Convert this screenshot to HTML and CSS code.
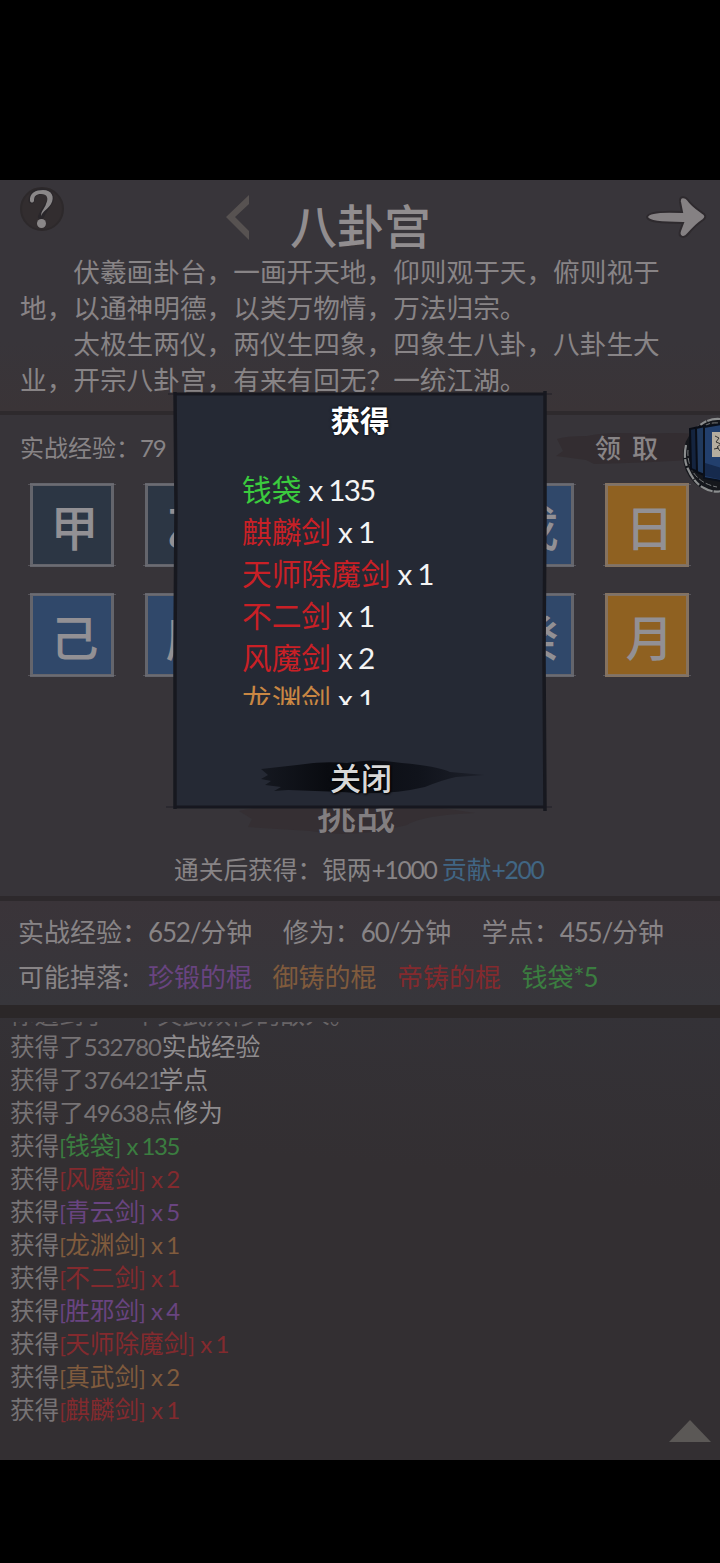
FILE: index.html
```
<!DOCTYPE html>
<html lang="zh-CN">
<head>
<meta charset="utf-8">
<title>八卦宫</title>
<link rel="stylesheet" href="styles.css">
</head>
<body>
<main class="game">
  <section class="intro">
    <header class="top">
      <svg class="help" width="48" height="48" viewBox="0 0 48 48"><circle cx="24" cy="24" r="21" fill="#322d2f" stroke="#2d292b" stroke-width="2"/><path d="M13.500 15.500C14 8 19 6 25 6.500c8 1 10 7 5 13l-5 8-2 4" fill="none" stroke="#29262a" stroke-width="6" stroke-linecap="round"/><path d="M12 16C11 8 18 5 25 5c9 0 12 7 8 14-3 5-8 7-10 12 0-5 4-8 5-12 3-6 1-10-5-10-5 0-7 2-7 7-1 2-3 2-4 0z" fill="#8a8788"/><circle cx="23.500" cy="38.500" r="4.500" fill="#8a8788"/></svg>
      <svg class="back" width="26" height="48" viewBox="0 0 26 48"><path d="M24 1v9L10 23l14 14v9L1 23z" fill="#575251"/></svg>
      <h1>八卦宫</h1>
      <svg class="next" width="66" height="46" viewBox="0 0 66 46"><path d="M3 23C4 18 18 17 38 18L36 8c-1-6 5-6 8-2 4 6 9 9 16 14q3 3-1 6c-6 4-10 8-15 14-4 5-10 3-8-3l3-8C17 29 4 28 3 23z" fill="#858183" stroke="#2e2a2e" stroke-width="2"/></svg>
    </header>
    <p class="story"><span>　　伏羲画卦台，一画开天地，仰则观于天，俯则视于</span><span>地，以通神明德，以类万物情，万法归宗。</span><span>　　太极生两仪，两仪生四象，四象生八卦，八卦生大</span><span>业，开宗八卦宫，有来有回无？一统江湖。</span></p>
  </section>

  <section class="arena">
    <div class="exp"><span>实战经验：<b class="n">79</b></span>
      <div class="claim"><svg width="170" height="42" viewBox="0 0 170 42"><path d="M4 11Q12 8 34 8Q55 3 90 6Q135 3 166 9L148 16L166 22L154 31Q92 35 41 36L33 32L3 28L10 23z" fill="#332d31"/></svg><span>领<em>取</em></span></div>
    </div>
    <div class="tiles">
      <div class="tile dim">甲</div><div class="tile dim">乙</div><div class="tile"></div><div class="tile"></div><div class="tile">戊</div><div class="tile gold">日</div>
      <div class="tile">己</div><div class="tile">庚</div><div class="tile"></div><div class="tile"></div><div class="tile">癸</div><div class="tile gold">月</div>
    </div>
    <div class="fight"><svg width="240" height="42" viewBox="0 0 240 42"><path d="M2 14Q58 2 119 5Q171 5 238 16Q185 18 170 28Q117 42 73 34L11 30L15 22z" fill="#352f33"/></svg><span>挑战</span></div>
    <p class="reward">通关后获得：银两<b class="n">+1000</b> <span class="blue">贡献<b class="n">+200</b></span></p>
  </section>

  <section class="info">
    <p class="rates"><span>实战经验：<b class="n">652/</b>分钟</span><span>修为：<b class="n">60/</b>分钟</span><span>学点：<b class="n">455/</b>分钟</span></p>
    <p class="drops"><span class="label">可能掉落:</span><span class="purple">珍锻的棍</span><span class="orange">御铸的棍</span><span class="red">帝铸的棍</span><span class="green">钱袋<b class="n">*5</b></span></p>
  </section>

  <section class="log">
    <div class="past"><p>你遇到了一个文武双修的敌人。</p></div>
    <p>获得了<b class="n">532780</b><i>实战经验</i></p>
    <p>获得了<b class="n m">376421</b><i>学点</i></p>
    <p>获得了<b class="n">49638</b>点<i>修为</i></p>
    <p>获得<span class="green"><u>[</u>钱袋<u>]</u><b class="n q">x 135</b></span></p>
    <p>获得<span class="red"><u>[</u>风魔剑<u>]</u><b class="n q">x 2</b></span></p>
    <p>获得<span class="purple"><u>[</u>青云剑<u>]</u><b class="n q">x 5</b></span></p>
    <p>获得<span class="orange"><u>[</u>龙渊剑<u>]</u><b class="n q">x 1</b></span></p>
    <p>获得<span class="red"><u>[</u>不二剑<u>]</u><b class="n q">x 1</b></span></p>
    <p>获得<span class="purple"><u>[</u>胜邪剑<u>]</u><b class="n q">x 4</b></span></p>
    <p>获得<span class="red"><u>[</u>天师除魔剑<u>]</u><b class="n q">x 1</b></span></p>
    <p>获得<span class="orange"><u>[</u>真武剑<u>]</u><b class="n q">x 2</b></span></p>
    <p>获得<span class="red"><u>[</u>麒麟剑<u>]</u><b class="n q">x 1</b></span></p>
    <svg class="up" width="42" height="22" viewBox="0 0 42 22"><path d="M21 0L42 22H0z" fill="#5b5856"/></svg>
  </section>

  <svg class="books" width="42" height="80" viewBox="0 0 42 80">
    <circle cx="40" cy="41" r="37" fill="#15171c"/>
    <path d="M40 4Q27 3 17 13M6 30Q3 44 8 54Q14 68 24 73Q32 78 42 76" fill="none" stroke="#8b8d8e" stroke-width="2.200" stroke-dasharray="13 1 7 2"/>
    <path d="M38 8Q28 7 22 13M8 35Q7 46 13 57Q21 69 37 72" fill="none" stroke="#777a7c" stroke-width="1" stroke-dasharray="6 2"/>
    <path d="M10 14l9-2 4 47-12-5z" fill="#14243f" stroke="#090d16" stroke-width="2"/><path d="M16 13l9-2 2 50-10-4z" fill="#20395d" stroke="#090d16" stroke-width="2"/>
    <path d="M24 12l18-3v57l-18-3z" fill="#223f6d" stroke="#0a101b" stroke-width="2"/><path d="M25 48l17 5v12l-17-4z" fill="#162a4d"/>
    <path d="M32 17h10v25H32z" fill="#b5ad9f"/><path d="M35 21l4 2-3 4 5 2-4 3 3 4M34 34l5-1" stroke="#333" fill="none"/>
  </svg>

  <div class="modal">
    <svg class="frame" width="388" height="428" viewBox="0 0 388 428"><path d="M10 8H379V420H10z" fill="#252934"/><g fill="none" stroke="#17181f"><path d="M9 7L379 7M9 420L379 420" stroke-width="3"/><path d="M9 5L10 120L9 260L9 422M379 4L379 130L378 270L379 424" stroke-width="3.500"/><path d="M2 7H386M0 420H386" stroke-width="1" opacity=".7"/></g></svg>
    <h2>获得</h2>
    <ul>
      <li class="green">钱袋<b class="n">x 135</b></li><li>麒麟剑<b class="n">x 1</b></li><li>天师除魔剑<b class="n">x 1</b></li><li>不二剑<b class="n">x 1</b></li><li>风魔剑<b class="n">x 2</b></li><li class="orange">龙渊剑<b class="n">x 1</b></li>
    </ul>
    <div class="close"><svg width="230" height="40" viewBox="0 0 230 40"><defs><linearGradient id="ink"><stop stop-color="#151820"/><stop offset=".3" stop-color="#090b10"/><stop offset=".7" stop-color="#10131b"/><stop offset="1" stop-color="#1e212b"/></linearGradient></defs><path d="M2 11L38 7Q62 3 88 5Q113 0 143 5Q178 8 191 14L226 17L197 19Q183 22 166 29Q128 38 83 34L29 32L15 33L22 29L6 27L12 23L2 21L9 17z" fill="url(#ink)"/></svg><span>关闭</span></div>
  </div>
</main>
</body>
</html>
```

FILE: styles.css
```
* { box-sizing: border-box; }
body, h1, h2, p, ul { margin: 0; padding: 0; }
body { width: 720px; height: 1563px; overflow: hidden; background: #000; padding-top: 180px; font-family: "Noto Sans CJK SC", sans-serif; font-weight: 400; color: #888486; }
svg { display: block; flex: none; }
li { list-style: none; }
i, b, em { font-style: normal; font-weight: inherit; }
u { text-decoration: none; }
.n { font-family: Lato, sans-serif; font-weight: 400; letter-spacing: -.045em; }
.game { position: relative; width: 720px; height: 1280px; overflow: hidden; background: #373439; }
.red { color: #832a2e; }
.green { color: #3b7d40; }
.purple { color: #694480; }
.orange { color: #805b3d; }
.blue { color: #416684; }

.intro { height: 235px; border-bottom: 4px solid #2e2a2d; background: linear-gradient(#38353a 70%, #3a3437); }
.top { height: 73px; display: grid; grid-template-columns: 200px 83px 1fr 75px; padding-left: 18px; }
.help { margin-top: 5px; }
.back { margin: 14px 0 0 7px; }
.top h1 { margin-left: -11px; font-size: 47px; line-height: 88px; font-weight: 500; color: #918d8f; }
.next { margin: 14px 0 0 -1px; }
.story { padding-left: 20px; font-size: 26.67px; line-height: 36px; }
.story span { display: block; white-space: pre; }

.arena { height: 481px; background: #373439; }
.exp { display: flex; justify-content: space-between; height: 68px; padding: 12px 29px 0 20px; font-size: 24px; line-height: 40px; }
.claim { display: grid; width: 142px; }
.claim > * { grid-area: 1 / 1; }
.claim svg { margin: 1px 0 0 4px; }
.claim span { display: flex; gap: 11px; margin-left: 46px; font-size: 26px; font-weight: 500; white-space: nowrap; }
.tiles { display: grid; grid-template-columns: repeat(6, 84px); grid-auto-rows: 84px; gap: 26px 31px; padding-left: 30px; }
.tile { position: relative; display: grid; place-items: center; padding: 0 0 1px 5px; border: 3px solid #64656c; background: #30486a; color: #929094; font-size: 48px; line-height: 74px; font-weight: 500; }
.tile::after { content: ""; position: absolute; inset: -2px -5px; border: solid #75747b; border-width: 1px 0; opacity: .5; }
.tile.dim { background: #2c3644; }
.tile.gold { background: #8f6121; border-color: #85725f; }
.fight { display: grid; width: 240px; height: 42px; margin: 120px auto 0 237px; }
.fight > * { grid-area: 1 / 1; }
.fight span { margin-top: -6px; padding-left: 80px; font-size: 39px; line-height: 42px; font-weight: 500; color: #827e80; }
.reward { margin-top: 9px; padding-left: 174px; font-size: 24.7px; line-height: 40px; white-space: nowrap; }
.reward .n { letter-spacing: -.053em; }

.info { height: 109px; border-top: 5px solid #2d292c; padding: 9px 0 0 18px; font-size: 26px; line-height: 42px; background: linear-gradient(#3a3439, #37363b); }
.info p { display: flex; white-space: pre; }
.rates { gap: 30.500px; }
.drops { margin-top: 2px; gap: 20.500px; }
.label { width: 109.500px; }

.log { height: 455px; border-top: 13px solid #2b2728; padding-left: 10px; font-size: 24.600px; line-height: 33px; color: #777375; background: linear-gradient(5deg, #332f32 65%, #343237 100%); }
.log p { height: 33px; white-space: pre; }
.log i { color: #8f8c8e; }
.log u { display: inline-block; width: 6px; font-size: 22px; font-family: Lato, sans-serif; }
.log .n { font-size: 24px; }
.log .n + i { margin-left: 1px; }
.log .m { margin-right: -3px; }
.log .q { margin-left: 6px; letter-spacing: -.06em; }
.past { display: flow-root; height: 7px; margin-top: 4px; overflow: hidden; }
.past p { margin-top: -25px; color: #686466; }
.up { margin: -5px 0 0 659px; }

.books { position: absolute; left: 680px; top: 235px; }
.modal { position: absolute; z-index: 1; left: 174px; top: 212px; width: 372px; height: 416px; padding-top: 4px; }
.frame { position: absolute; left: -8px; top: -5px; z-index: -1; }
.modal h2 { text-align: center; font-size: 29.500px; line-height: 46px; font-weight: 700; color: #fff; text-shadow: 0 0 3px #000; }
.modal ul { height: 241px; margin-top: 22px; padding: 4px 0 0 68px; overflow: hidden; font-size: 29.700px; line-height: 42px; color: #c92026; }
.modal li { height: 42px; white-space: nowrap; }
.modal li.green { color: #3bcb3e; }
.modal li.orange { color: #c98743; }
.modal .n { margin-left: 7px; color: #f4f4f4; letter-spacing: -.06em; word-spacing: 1px; }
.close { display: grid; margin: 53px 0 0 85px; }
.close > * { grid-area: 1 / 1; }
.close span { padding-left: 71px; font-size: 31px; line-height: 37px; font-weight: 500; color: #d8d8d8; text-shadow: 0 0 3px #000, 1px 1px 2px #000; }
```
